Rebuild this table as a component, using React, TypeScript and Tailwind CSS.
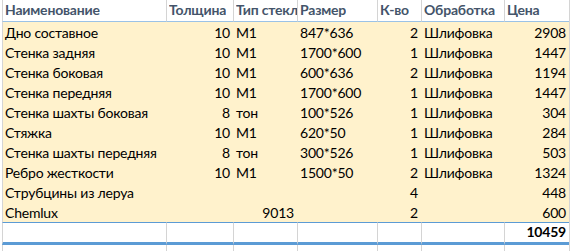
import React from "react";

const GRID = "grid grid-cols-[164px_67px_64px_80px_44px_83px_65px_1fr]";

const headers = ["Наименование", "Толщина", "Тип стекла", "Размер", "К-во", "Обработка", "Цена"];

const rows: string[][] = [
    ["Дно составное", "10", "М1", "847*636", "2", "Шлифовка", "2908"],
    ["Стенка задняя", "10", "М1", "1700*600", "1", "Шлифовка", "1447"],
    ["Стенка боковая", "10", "М1", "600*636", "2", "Шлифовка", "1194"],
    ["Стенка передняя", "10", "М1", "1700*600", "1", "Шлифовка", "1447"],
    ["Стенка шахты боковая", "8", "тон", "100*526", "1", "Шлифовка", "304"],
    ["Стяжка", "10", "М1", "620*50", "1", "Шлифовка", "284"],
    ["Стенка шахты передняя", "8", "тон", "300*526", "1", "Шлифовка", "503"],
    ["Ребро жесткости", "10", "М1", "1500*50", "2", "Шлифовка", "1324"],
    ["Струбцины из леруа", "", "", "", "4", "", "448"],
    ["Chemlux", "", "9013", "", "2", "", "600"],
];

const isNum = (v: string) => /^\d+$/.test(v);

function Cell({ value, className }: { value: string; className?: string }) {
    const align = isNum(value) ? "justify-end pr-[3px]" : "justify-start pl-[2px]";
    return (
        <div className={`flex items-end overflow-hidden whitespace-nowrap border-l border-[#d4d4d4] ${align} ${className ?? ""}`}>
            <span className="leading-[19px]">{value}</span>
        </div>
    );
}

export default function App() {
    return (
        <div className="w-[573px] h-[251px] overflow-hidden bg-white pl-[2px] text-[14px] tracking-[-0.2px] text-black [font-family:Lato,'Liberation_Sans',sans-serif]">
            {/* шапка */}
            <div className={`${GRID} h-[22px]`}>
                {headers.map((h) => (
                    <div
                        key={h}
                        className="flex items-end overflow-hidden whitespace-nowrap border-l border-b border-l-[#d4d4d4] border-b-[#9bc2e6] pl-[2px] pb-[2px] font-bold text-[#44546a]"
                    >
                        <span className="min-w-0 overflow-hidden leading-[18px]">{h}</span>
                    </div>
                ))}
                <div className="border-l border-[#d4d4d4]" />
            </div>

            {/* данные */}
            {rows.map((r, i) => (
                <div key={i} className={`${GRID} h-[20px]`}>
                    {r.map((v, j) => (
                        <Cell
                            key={j}
                            value={v}
                            className={`bg-[#fff2cc] ${j === 0 ? "" : "border-l-transparent"}`}
                        />
                    ))}
                    <div className="border-l border-[#d4d4d4]" />
                </div>
            ))}

            {/* итого */}
            <div className={`${GRID} h-[23px]`}>
                {["", "", "", "", "", "", "10459"].map((v, j) => (
                    <Cell
                        key={j}
                        value={v}
                        className="border-t border-b-[3px] border-t-[#5b9bd5] border-b-[#5b9bd5] border-b-double pb-[1px] font-bold"
                    />
                ))}
                <div className="border-l border-[#d4d4d4]" />
            </div>

            <div className={`${GRID} h-[20px]`}>
                {Array.from({ length: 8 }).map((_, j) => (
                    <div key={j} className="border-l border-[#d4d4d4]" />
                ))}
            </div>
        </div>
    );
}
